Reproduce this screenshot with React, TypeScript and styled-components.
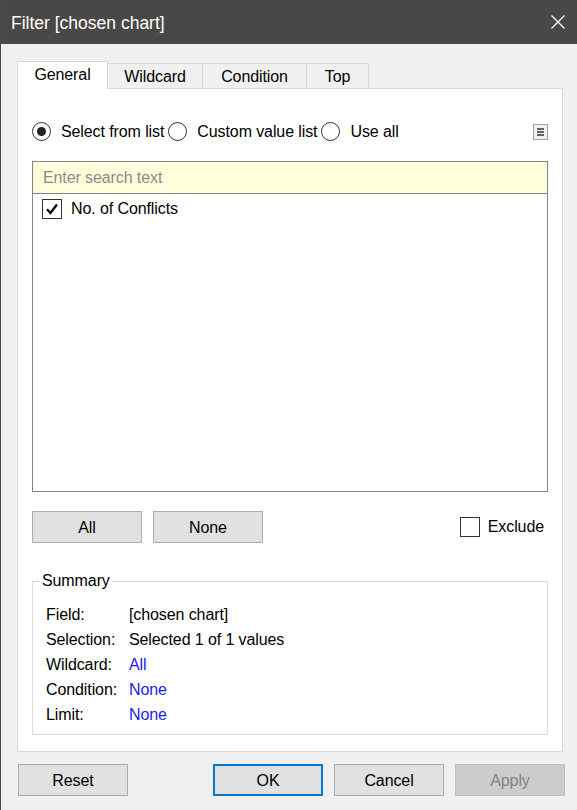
import React from "react";
import styled, { createGlobalStyle } from "styled-components";

const Global = createGlobalStyle`
  html, body { margin: 0; padding: 0; background: #f0f0f0; }
  body { font-family: "Liberation Sans", Arial, sans-serif; }
  * { box-sizing: border-box; }
`;

const Window = styled.div`
  width: 577px;
  height: 810px;
  display: flex;
  flex-direction: column;
  background: #f0f0f0;
  border-left: 1px solid #4d4b49;
  font-family: "Liberation Sans", Arial, sans-serif;
  font-size: 16px;
  letter-spacing: -0.1px;
  color: #000;
  overflow: hidden;
`;

const TitleBar = styled.div`
  height: 44px;
  flex: none;
  display: flex;
  align-items: center;
  justify-content: space-between;
  background: #4a4846;
  padding: 0 12px 0 11px;
  margin-left: -1px;
`;

const TitleText = styled.div`
  color: #ffffff;
  font-size: 17.5px;
  letter-spacing: 0;
  padding-top: 3px;
`;

const CloseBtn = styled.div`
  width: 14px;
  height: 14px;
  display: flex;
`;

const Body = styled.div`
  flex: 1;
  display: flex;
  flex-direction: column;
  padding: 17px 14px 0 16px;
`;

const TabBar = styled.div`
  display: flex;
  align-items: flex-end;
  height: 27px;
  position: relative;
  z-index: 1;
`;

const Tab = styled.div<{ $w: number; $active?: boolean }>`
  width: ${(p) => p.$w}px;
  height: ${(p) => (p.$active ? 28 : 25)}px;
  margin-bottom: ${(p) => (p.$active ? -1 : 0)}px;
  margin-left: -1px;
  &:first-child { margin-left: 0; }
  display: flex;
  align-items: center;
  justify-content: center;
  background: ${(p) => (p.$active ? "#ffffff" : "#f0f0f0")};
  border: 1px solid #d9d9d9;
  border-bottom: none;
  padding-top: ${(p) => (p.$active ? 0 : 2)}px;
  padding-bottom: ${(p) => (p.$active ? 2 : 0)}px;
  position: relative;
  z-index: ${(p) => (p.$active ? 2 : 1)};
`;

const Panel = styled.div`
  background: #ffffff;
  border: 1px solid #d9d9d9;
  display: flex;
  flex-direction: column;
  padding: 32px 14px 16px 14px;
`;

const RadioRow = styled.div`
  display: flex;
  align-items: center;
  height: 20px;
  padding-top: 1px;
`;

const RadioOption = styled.label`
  display: flex;
  align-items: center;
  gap: 10px;
  margin-right: 4px;
  white-space: nowrap;
`;

const RadioCircle = styled.span<{ $on?: boolean }>`
  width: 19px;
  height: 19px;
  border-radius: 50%;
  border: 1px solid #333333;
  background: #fff;
  display: flex;
  align-items: center;
  justify-content: center;
  flex: none;
  &::after {
    content: "";
    display: ${(p) => (p.$on ? "block" : "none")};
    width: 9px;
    height: 9px;
    border-radius: 50%;
    background: #222;
  }
`;

const MenuBtn = styled.div`
  margin-left: auto;
  width: 15px;
  height: 16px;
  border: 1px solid #a0a0a0;
  background: #f0f0f0;
  display: flex;
  flex-direction: column;
  align-items: center;
  justify-content: center;
  gap: 1px;
  margin-top: 1px;
`;

const MenuBar = styled.span`
  width: 7px;
  height: 2px;
  background: #5a6270;
`;

const ListBox = styled.div`
  margin-top: 20px;
  height: 331px;
  border: 1px solid #82858c;
  display: flex;
  flex-direction: column;
`;

const Search = styled.div`
  height: 32px;
  background: #ffffdc;
  border-bottom: 1px solid #82858c;
  color: #8a8a8a;
  display: flex;
  align-items: center;
  padding: 1px 10px 0;
`;

const Item = styled.div`
  display: flex;
  align-items: center;
  gap: 9px;
  height: 29px;
  padding-left: 9px;
  padding-top: 1px;
`;

const CheckBox = styled.span`
  width: 20px;
  height: 20px;
  border: 1px solid #333333;
  background: #fff;
  display: flex;
  align-items: center;
  justify-content: center;
  flex: none;
`;

const ButtonRow = styled.div`
  margin-top: 19px;
  display: flex;
  align-items: center;
  gap: 11px;
`;

const Button = styled.div<{ $variant?: "default" | "primary" | "disabled" }>`
  width: 110px;
  height: 32px;
  display: flex;
  align-items: center;
  justify-content: center;
  padding-top: 2px;
  background: ${(p) => (p.$variant === "disabled" ? "#cccccc" : "#e1e1e1")};
  border: ${(p) =>
    p.$variant === "primary"
      ? "2px solid #0078d7"
      : p.$variant === "disabled"
      ? "1px solid #bfbfbf"
      : "1px solid #adadad"};
  color: ${(p) => (p.$variant === "disabled" ? "#838383" : "#000")};
`;

const ExcludeLabel = styled.label`
  margin-left: auto;
  display: flex;
  align-items: center;
  gap: 8px;
  margin-right: 4px;
`;

const Group = styled.fieldset`
  margin: 29px 0 0 0;
  border: 1px solid #dcdcdc;
  padding: 12px 10px 7px 13px;
  min-width: 0;
`;

const Legend = styled.legend`
  padding: 0 2px;
  margin-left: -6px;
  line-height: 18px;
`;

const SummaryGrid = styled.div`
  display: grid;
  grid-template-columns: 83px auto;
  grid-auto-rows: 25px;
  align-items: center;
`;

const Value = styled.span<{ $link?: boolean }>`
  color: ${(p) => (p.$link ? "#1a1aff" : "#000")};
`;

const Footer = styled.div`
  margin: 12px -2px 0 1px;
  display: flex;
  gap: 11px;
`;

const Spacer = styled.div`
  flex: 1;
`;

const Check = () => (
  <svg width="14" height="14" viewBox="0 0 14 14">
    <path d="M2 7.2 L5.4 11 L12 2.5" fill="none" stroke="#000" strokeWidth="2.3" />
  </svg>
);

const summary: { label: string; value: string; link?: boolean }[] = [
  { label: "Field:", value: "[chosen chart]" },
  { label: "Selection:", value: "Selected 1 of 1 values" },
  { label: "Wildcard:", value: "All", link: true },
  { label: "Condition:", value: "None", link: true },
  { label: "Limit:", value: "None", link: true },
];

export default function App() {
  return (
    <>
      <Global />
      <Window>
        <TitleBar>
          <TitleText>Filter [chosen chart]</TitleText>
          <CloseBtn>
            <svg width="14" height="14" viewBox="0 0 14 14">
              <path d="M0.5 0.5 L13.5 13.5 M13.5 0.5 L0.5 13.5" stroke="#ffffff" strokeWidth="1.3" fill="none" />
            </svg>
          </CloseBtn>
        </TitleBar>
        <Body>
          <TabBar>
            <Tab $w={91} $active>General</Tab>
            <Tab $w={96}>Wildcard</Tab>
            <Tab $w={105}>Condition</Tab>
            <Tab $w={63}>Top</Tab>
          </TabBar>
          <Panel>
            <RadioRow>
              <RadioOption>
                <RadioCircle $on />
                Select from list
              </RadioOption>
              <RadioOption>
                <RadioCircle />
                Custom value list
              </RadioOption>
              <RadioOption>
                <RadioCircle />
                Use all
              </RadioOption>
              <MenuBtn>
                <MenuBar />
                <MenuBar />
                <MenuBar />
              </MenuBtn>
            </RadioRow>
            <ListBox>
              <Search>Enter search text</Search>
              <Item>
                <CheckBox>
                  <Check />
                </CheckBox>
                No. of Conflicts
              </Item>
            </ListBox>
            <ButtonRow>
              <Button>All</Button>
              <Button>None</Button>
              <ExcludeLabel>
                <CheckBox />
                Exclude
              </ExcludeLabel>
            </ButtonRow>
            <Group>
              <Legend>Summary</Legend>
              <SummaryGrid>
                {summary.map((r) => (
                  <React.Fragment key={r.label}>
                    <span>{r.label}</span>
                    <Value $link={r.link}>{r.value}</Value>
                  </React.Fragment>
                ))}
              </SummaryGrid>
            </Group>
          </Panel>
          <Footer>
            <Button>Reset</Button>
            <Spacer />
            <Button $variant="primary">OK</Button>
            <Button>Cancel</Button>
            <Button $variant="disabled">Apply</Button>
          </Footer>
        </Body>
      </Window>
    </>
  );
}
